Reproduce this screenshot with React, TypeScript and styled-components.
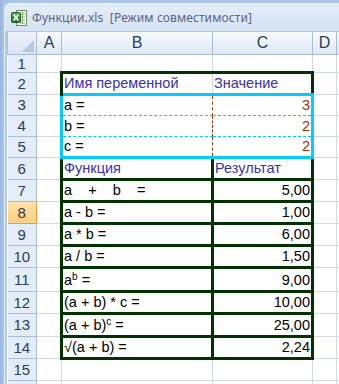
import React from 'react';
import styled, { createGlobalStyle } from 'styled-components';

const GRID = '1px solid #d0d7e5';
const G = '3px solid #003300';
const CY = '3px solid #00ccff';
const CYD = '1px dashed #00ccff';
const BR = '1px dashed #993300';

const Global = createGlobalStyle`
  html, body { margin: 0; padding: 0; }
  body {
    width: 339px; height: 384px; overflow: hidden;
    background: #a3bfe5;
    font-family: "Liberation Sans", Arial, sans-serif;
  }
`;

const Frame = styled.div`
  width: 339px; height: 384px; box-sizing: border-box;
  padding: 3px 0 0 4px;
  background: linear-gradient(90deg, #98b6e0 0, #a9c5ea 4px);
  overflow: hidden;
`;

const Window = styled.div`
  height: 100%;
  display: flex; flex-direction: column;
  border-top-left-radius: 6px;
  border-left: 1px solid #e4edf9;
  border-top: 1px solid #eef4fc;
  background: #dbe6f5;
  overflow: hidden;
`;

const TitleBar = styled.div`
  height: 27px; flex: none;
  display: flex; align-items: center; gap: 5px;
  padding-left: 6px;
  background: linear-gradient(#e4edf8, #d5e2f3);
  border-bottom: 1px solid #b3c7e1;
`;

const Title = styled.span`
  font-family: "Noto Sans", "Open Sans", sans-serif;
  font-size: 12px;
  color: #5a6483;
  white-space: pre;
  letter-spacing: 0.1px;
`;

const SheetArea = styled.div`
  flex: 1;
  background: #fff;
  border-left: 2px solid #b4c9e4;
  overflow: hidden;
`;

const Grid = styled.table`
  border-collapse: collapse;
  table-layout: fixed;
  width: 389px;
  font-family: "Liberation Sans", Arial, sans-serif;
  font-size: 14.5px;
`;

const Row = styled.tr<{ $h: number }>`
  height: ${p => p.$h}px;
`;

const ColHead = styled.th`
  padding: 0;
  font-weight: normal;
  font-size: 16px;
  color: #243f62;
  text-align: center;
  vertical-align: middle;
  background: linear-gradient(#f8fafd, #e9eff8 60%, #dfe7f3);
  border: 1px solid #a8bdd7;
  border-top: none;
`;

const Corner = styled.th`
  padding: 0;
  background: linear-gradient(#eef3fa, #dae4f2);
  border: 1px solid #a8bdd7;
  border-top: none;
  vertical-align: bottom;
  text-align: right;
  line-height: 0;
`;

const RowHead = styled.th<{ $sel?: boolean }>`
  padding: 0;
  font-weight: normal;
  font-size: 15px;
  color: ${p => (p.$sel ? '#2d3a4a' : '#243f62')};
  text-align: center;
  vertical-align: middle;
  background: ${p => (p.$sel ? 'linear-gradient(#fde3a8, #fbcf7d)' : '#e4ecf7')};
  border: 1px solid ${p => (p.$sel ? '#f29536' : '#a8bdd7')};
  border-left: none;
`;

const Cell = styled.td<{
  $t?: string; $r?: string; $b?: string; $l?: string;
  $align?: 'left' | 'right'; $tone?: 'head' | 'value' | 'plain';
}>`
  border-top: ${p => p.$t ?? GRID};
  border-right: ${p => p.$r ?? GRID};
  border-bottom: ${p => p.$b ?? GRID};
  border-left: ${p => p.$l ?? GRID};
  padding: 0 1px 2px 1px;
  vertical-align: bottom;
  text-align: ${p => p.$align ?? 'left'};
  color: ${p => (p.$tone === 'head' ? '#3a2fb0' : p.$tone === 'value' ? '#993300' : '#000')};
  white-space: pre;
  overflow: hidden;
  font-size: 14.5px;
  line-height: 16px;
`;

const Sup = styled.sup`
  font-size: 10px;
  line-height: 0;
  vertical-align: 5px;
`;

type Spec = {
  content?: React.ReactNode;
  align?: 'left' | 'right';
  tone?: 'head' | 'value' | 'plain';
  t?: string; r?: string; b?: string; l?: string;
};

type RowSpec = { n: number; h: number; label?: boolean; b?: Spec; c?: Spec; sel?: boolean };

const fn = (content: React.ReactNode, value: string): { b: Spec; c: Spec } => ({
  b: { content, t: G, b: G, l: G, r: G },
  c: { content: value, align: 'right', t: G, b: G, l: G, r: G },
});

const rows: RowSpec[] = [
  { n: 1, h: 18 },
  {
    n: 2, h: 22,
    b: { content: 'Имя переменной', tone: 'head', t: G, l: G, b: CY },
    c: { content: 'Значение', tone: 'head', t: G, r: G, b: CY },
  },
  {
    n: 3, h: 21,
    b: { content: 'a =', t: CY, l: CY, b: CYD, r: BR },
    c: { content: '3', tone: 'value', align: 'right', t: CY, r: CY, b: CYD, l: BR },
  },
  {
    n: 4, h: 21,
    b: { content: 'b =', t: CYD, l: CY, b: CYD, r: BR },
    c: { content: '2', tone: 'value', align: 'right', t: CYD, r: CY, b: CYD, l: BR },
  },
  {
    n: 5, h: 21,
    b: { content: 'c =', t: CYD, l: CY, b: CY, r: BR },
    c: { content: '2', tone: 'value', align: 'right', t: CYD, r: CY, b: CY, l: BR },
  },
  {
    n: 6, h: 22,
    b: { content: 'Функция', tone: 'head', t: CY, l: G, b: G, r: G },
    c: { content: 'Результат', tone: 'head', t: CY, l: G, b: G, r: G },
  },
  { n: 7, h: 22, ...fn('a    +    b    =', '5,00') },
  { n: 8, h: 22, sel: true, ...fn('a - b =', '1,00') },
  { n: 9, h: 22, ...fn('a * b =', '6,00') },
  { n: 10, h: 22, ...fn('a / b =', '1,50') },
  { n: 11, h: 24, ...fn(<>a<Sup>b</Sup> =</>, '9,00') },
  { n: 12, h: 22, ...fn('(a + b) * c =', '10,00') },
  { n: 13, h: 23, ...fn(<>(a + b)<Sup>c</Sup> =</>, '25,00') },
  { n: 14, h: 22, ...fn('√(a + b) =', '2,24') },
  { n: 15, h: 22 },
  { n: 16, h: 22, label: false },
];

const ExcelIcon = () => (
  <svg width="16" height="16" viewBox="0 0 16 16">
    <defs>
      <linearGradient id="xg" x1="0" y1="0" x2="0" y2="1">
        <stop offset="0" stopColor="#5fb34f" />
        <stop offset="1" stopColor="#1f7a2a" />
      </linearGradient>
    </defs>
    <rect x="5.5" y="0.5" width="10" height="15" fill="#fff" stroke="#6f8f63" />
    <path d="M9 4h5M9 7h5M9 10h5M9 13h5M11.5 2v12" stroke="#7fb070" strokeWidth="1" />
    <rect x="0.5" y="2.5" width="9" height="10" rx="1" fill="url(#xg)" stroke="#1b6324" />
    <path d="M3 5l4 5M7 5l-4 5" stroke="#fff" strokeWidth="1.6" strokeLinecap="round" />
  </svg>
);

const CornerMark = () => (
  <svg width="12" height="12" viewBox="0 0 12 12" style={{ marginRight: 2, marginBottom: 2 }}>
    <path d="M12 0V12H0Z" fill="#b7c9df" />
  </svg>
);

const widths = [29, 25, 151, 100, 24, 60];

export default function App() {
  return (
    <>
      <Global />
      <Frame>
        <Window>
          <TitleBar>
            <ExcelIcon />
            <Title>{'Функции.xls  [Режим совместимости]'}</Title>
          </TitleBar>
          <SheetArea>
            <Grid>
              <colgroup>
                {widths.map((w, i) => (
                  <col key={i} style={{ width: w }} />
                ))}
              </colgroup>
              <thead>
                <Row $h={22}>
                  <Corner><CornerMark /></Corner>
                  <ColHead>A</ColHead>
                  <ColHead>B</ColHead>
                  <ColHead>C</ColHead>
                  <ColHead>D</ColHead>
                  <ColHead />
                </Row>
              </thead>
              <tbody>
                {rows.map(r => (
                  <Row key={r.n} $h={r.h}>
                    <RowHead $sel={r.sel}>{r.label === false ? '' : r.n}</RowHead>
                    <Cell $r={r.b?.l} />
                    <Cell
                      $t={r.b?.t} $r={r.b?.r} $b={r.b?.b} $l={r.b?.l}
                      $align={r.b?.align} $tone={r.b?.tone}
                    >
                      {r.b?.content}
                    </Cell>
                    <Cell
                      $t={r.c?.t} $r={r.c?.r} $b={r.c?.b} $l={r.c?.l}
                      $align={r.c?.align} $tone={r.c?.tone}
                    >
                      {r.c?.content}
                    </Cell>
                    <Cell $l={r.c?.r} />
                    <Cell />
                  </Row>
                ))}
              </tbody>
            </Grid>
          </SheetArea>
        </Window>
      </Frame>
    </>
  );
}
